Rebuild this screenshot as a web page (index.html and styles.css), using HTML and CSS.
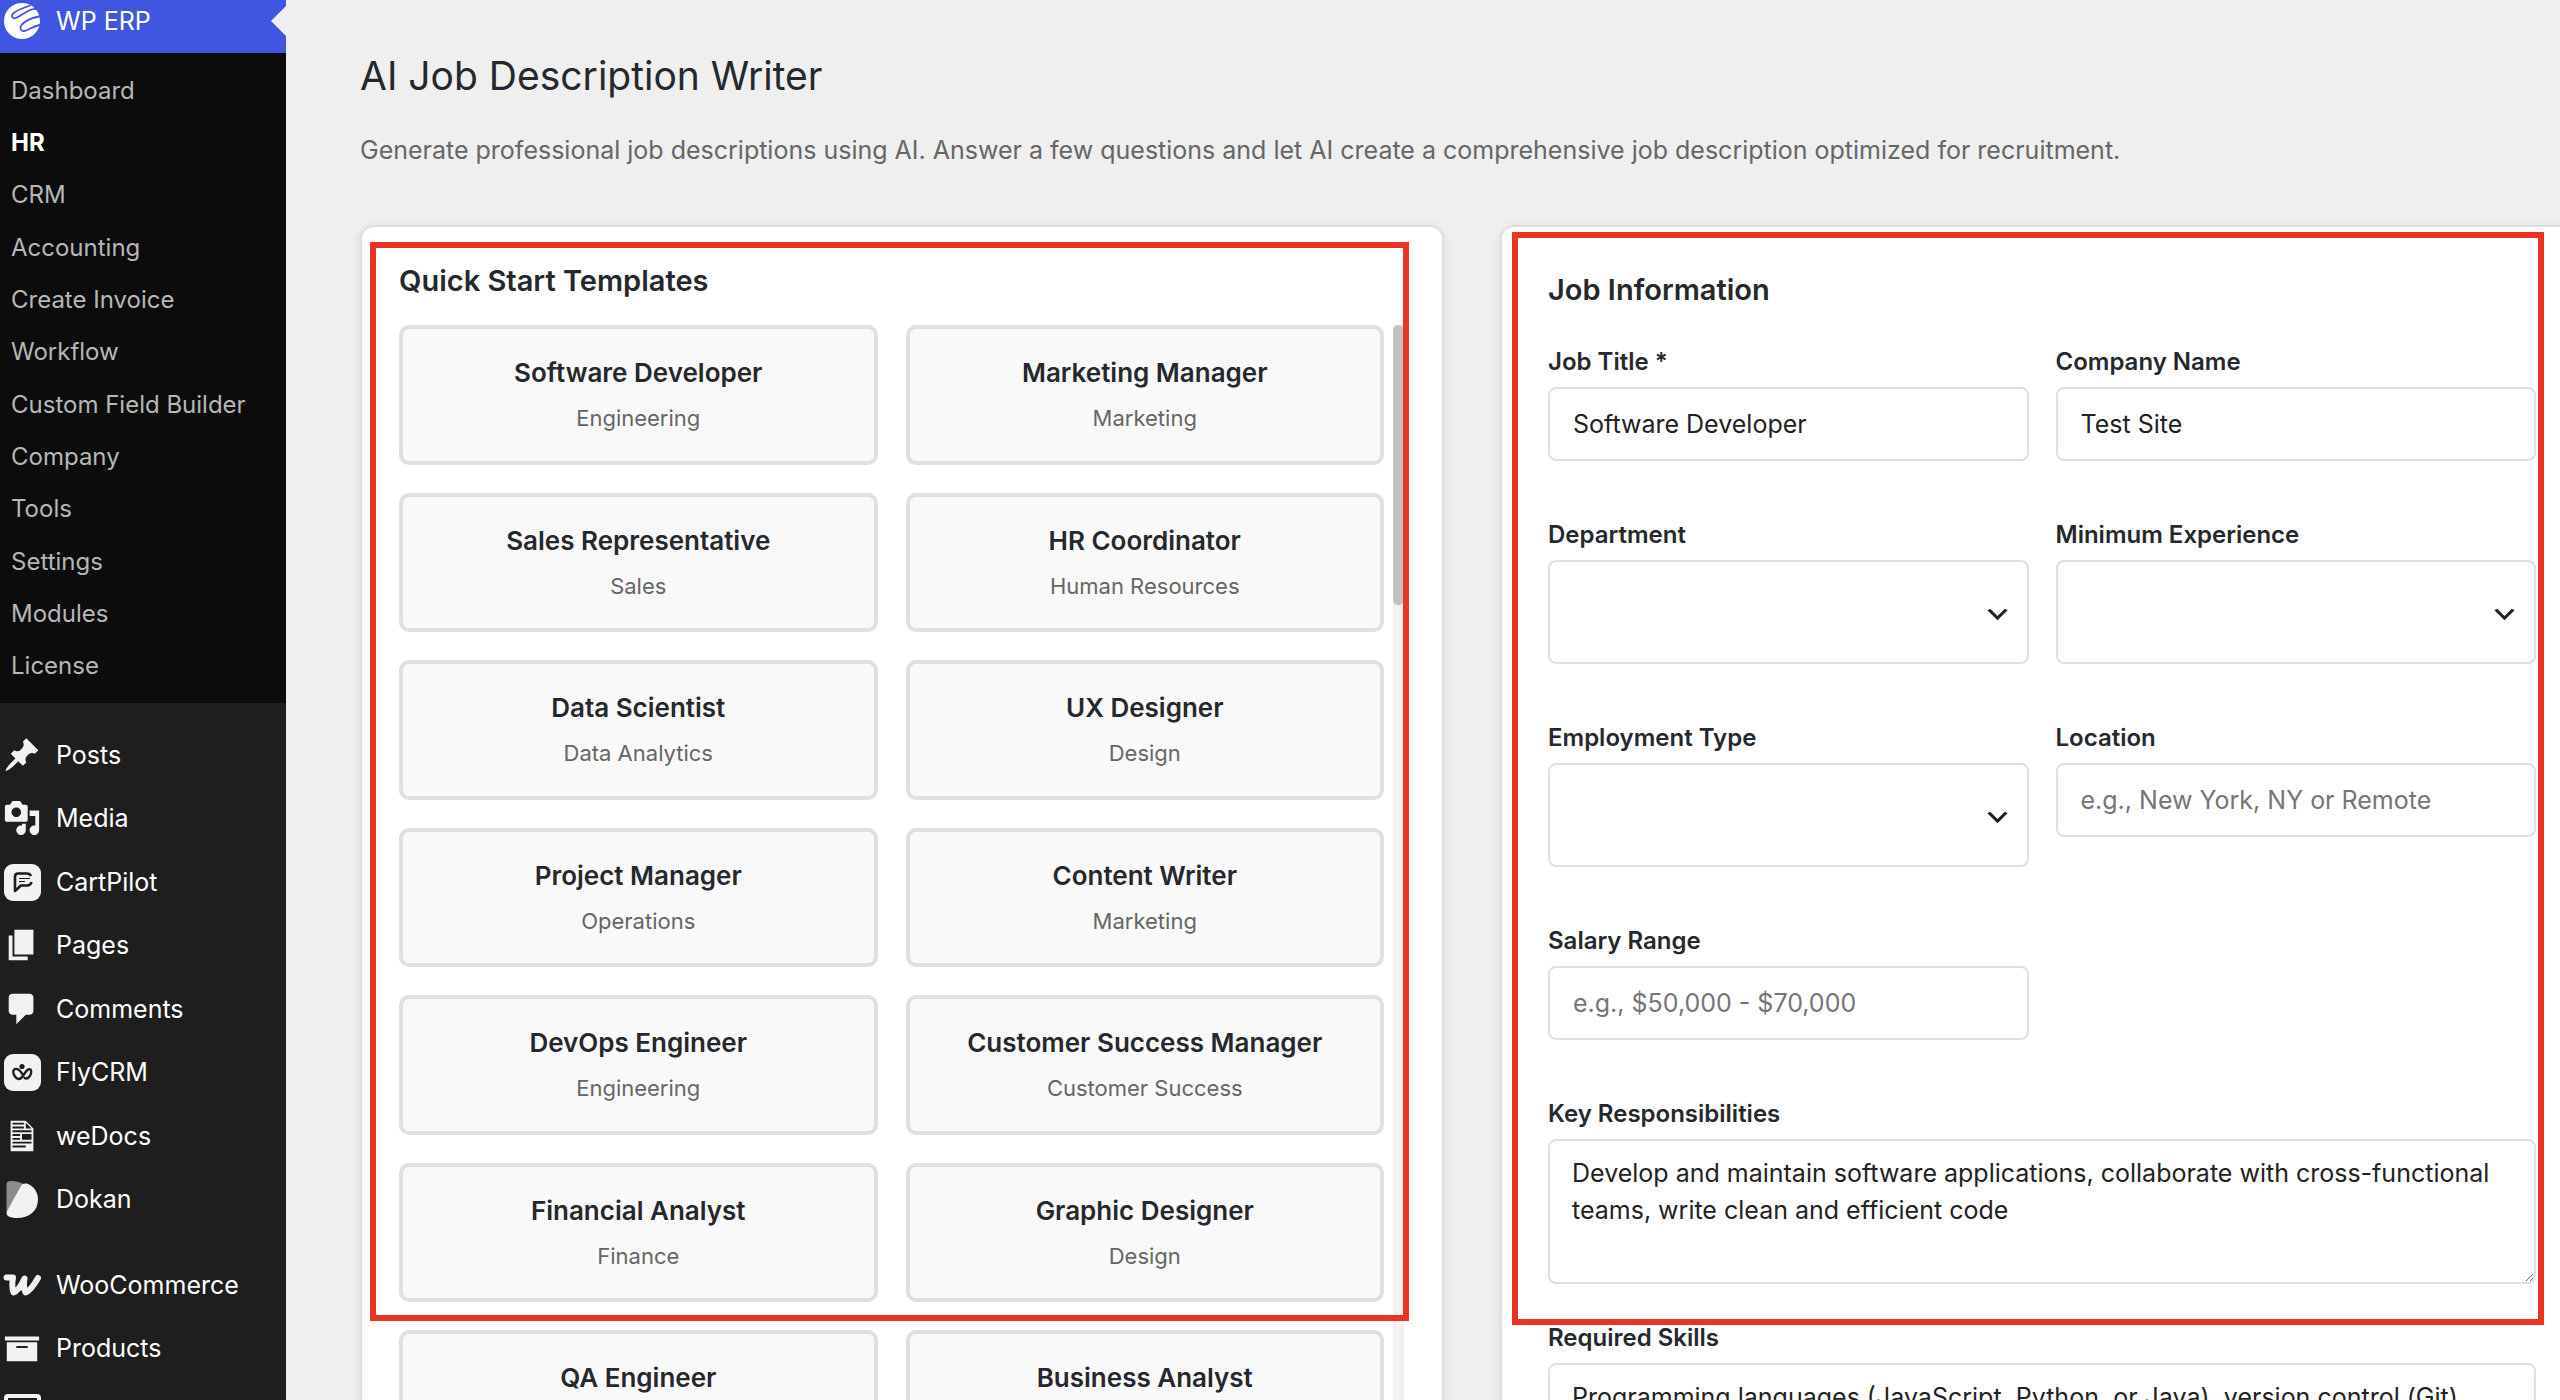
FILE: index.html
```
<!DOCTYPE html>
<html lang="en">
<head>
    <meta charset="UTF-8">
    <meta name="viewport" content="width=device-width, initial-scale=1.0">
    <title>AI Job Description Writer</title>
    <link rel="stylesheet" href="styles.css">
</head>
<body>
    <nav class="sidebar">
        <a class="menu-item current" href="#">
            <svg class="menu-icon" viewBox="0 0 38 38">
                <circle cx="19" cy="19" r="18" fill="#fff"/>
                <g fill="none" stroke="#4056e0" stroke-width="1.8" stroke-linecap="round">
                    <path d="M27 3.500C20 6 13 8.500 10 11.500c-2.500 3 0 5.500 3 4.500 4-1.500 7-4.500 12-7 3-1.500 5-2.500 7.500-2"/>
                    <path d="M36 14.500c-6 1-13 4-17 8-3 3-1.500 7 2 6.500 4-.5 7-4 15.500-6"/>
                </g>
            </svg>
            <span>WP ERP</span>
        </a>
        <ul class="submenu">
            <li><a href="#">Dashboard</a></li>
            <li><a class="active" href="#">HR</a></li>
            <li><a href="#">CRM</a></li>
            <li><a href="#">Accounting</a></li>
            <li><a href="#">Create Invoice</a></li>
            <li><a href="#">Workflow</a></li>
            <li><a href="#">Custom Field Builder</a></li>
            <li><a href="#">Company</a></li>
            <li><a href="#">Tools</a></li>
            <li><a href="#">Settings</a></li>
            <li><a href="#">Modules</a></li>
            <li><a href="#">License</a></li>
        </ul>
        <div class="menu-group">
            <a class="menu-item" href="#">
                <svg class="menu-icon" viewBox="0 0 20 20"><path d="M10.440 3.020l1.820-1.820 6.360 6.350-1.830 1.820c-1.050-.68-2.480-.57-3.410.36l-.75.75c-.92.93-1.040 2.350-.35 3.410l-1.830 1.820-2.410-2.410-2.800 2.790c-.42.42-3.380 2.710-3.800 2.290s1.860-3.390 2.280-3.810l2.790-2.790L4.100 9.360l1.830-1.820c1.050.69 2.480.57 3.400-.36l.75-.75c.93-.92 1.050-2.350.36-3.410z"/></svg>
                <span>Posts</span>
            </a>
            <a class="menu-item" href="#">
                <svg class="menu-icon" viewBox="0 0 20 20"><path d="M13 11V4c0-.55-.45-1-1-1h-1.670L9 1H5L3.670 3H2c-.55 0-1 .45-1 1v7c0 .55.45 1 1 1h10c.55 0 1-.45 1-1zM7 4.500c1.380 0 2.500 1.120 2.500 2.500S8.380 9.500 7 9.500 4.500 8.380 4.500 7 5.620 4.500 7 4.500zM14 6h5v10.500c0 1.380-1.120 2.500-2.500 2.500S14 17.880 14 16.500s1.120-2.500 2.500-2.500c.17 0 .34.02.5.05V9h-3V6zm-4 8.050V13h2v3.500c0 1.380-1.120 2.500-2.500 2.500S7 17.880 7 16.500 8.120 14 9.500 14c.17 0 .34.02.5.05z"/></svg>
                <span>Media</span>
            </a>
            <a class="menu-item" href="#">
                <svg class="menu-icon" viewBox="0 0 38 38">
                    <rect x="1" y="1" width="37" height="37" rx="9"/>
                    <path d="M28 13c-1-2-2-2.500-4-2.500H15c-2 0-3 1-3 3V28l6-5.500h6c2.500 0 4-1.500 4.500-3.500" fill="none" stroke="#1e1e1e" stroke-width="2.600" stroke-linejoin="round"/>
                    <path d="M16 15.500h11M16 18.500h6" stroke="#1e1e1e" stroke-width="1.200"/>
                </svg>
                <span>CartPilot</span>
            </a>
            <a class="menu-item" href="#">
                <svg class="menu-icon" viewBox="0 0 20 20"><path d="M6 15V2h10v13H6zm-1 1h8v2H3V5h2v11z"/></svg>
                <span>Pages</span>
            </a>
            <a class="menu-item" href="#">
                <svg class="menu-icon" viewBox="0 0 20 20"><path d="M5 2h9c1.100 0 2 .9 2 2v7c0 1.100-.9 2-2 2h-2l-5 5v-5H5c-1.100 0-2-.9-2-2V4c0-1.100.9-2 2-2z"/></svg>
                <span>Comments</span>
            </a>
            <a class="menu-item" href="#">
                <svg class="menu-icon" viewBox="0 0 38 38">
                    <rect x="1" y="1" width="37" height="37" rx="9"/>
                    <circle cx="19" cy="13.500" r="2.600" fill="#1e1e1e"/>
                    <path d="M19 20.500c-2-3-5-5-7-4.500-2.500 1-2 5 0 7.500 2 3 5 3.500 7 .5l4-5.500c1.500-2 3.500-3 4.500-2 1.500 2 .5 6-2 8-1.500 1.200-3 1.200-4 .3" fill="none" stroke="#1e1e1e" stroke-width="2.400" stroke-linecap="round"/>
                </svg>
                <span>FlyCRM</span>
            </a>
            <a class="menu-item" href="#">
                <svg class="menu-icon" viewBox="0 0 20 20"><path fill-rule="evenodd" d="M12 2l4 4v12H4V2h8zM5 3v1h6V3H5zm7 3h3l-3-3v3zM5 5v1h6V5H5zm10 3V7H5v1h10zM5 9v1h4V9H5zm10 3V9h-5v3h5zM5 11v1h4v-1H5zm10 3v-1H5v1h10zm-3 2v-1H5v1h7z"/></svg>
                <span>weDocs</span>
            </a>
            <a class="menu-item" href="#">
                <svg class="menu-icon" viewBox="0 0 38 38">
                    <path d="M3.500 32V4c0-2 2-3 5-3 5 0 8 1 12 3z" fill="#8c8b8c"/>
                    <path d="M18 6c1.500-2.500 4-3 7-2 6 2.500 10 8.500 10 15.500C35 31 26 38 14 38c-7 0-12-2-10-7z"/>
                </svg>
                <span>Dokan</span>
            </a>
        </div>
        <div class="menu-group shop-group">
            <a class="menu-item" href="#">
                <svg class="menu-icon" viewBox="0 0 38 38"><path d="M3.500 11.500h6.500c-1 6-1 11 .5 15C15 25 19 18 21.500 12.500c-1 6-1 10 1 14C27 25 31 19 35 12" fill="none" stroke="#f3f1f2" stroke-width="6" stroke-linecap="round" stroke-linejoin="round"/></svg>
                <span>WooCommerce</span>
            </a>
            <a class="menu-item" href="#">
                <svg class="menu-icon" viewBox="0 0 20 20"><path d="M19 4v2H1V4h18zM2 7h16v10H2V7zm11 3V9H7v1h6z"/></svg>
                <span>Products</span>
            </a>
            <a class="menu-item" href="#" aria-label="Payments">
                <svg class="menu-icon" viewBox="0 0 38 38"><rect x="3" y="4" width="33" height="28" rx="2" fill="none" stroke="#f3f1f2" stroke-width="4"/></svg>
            </a>
        </div>
    </nav>

    <main class="content">
        <h1>AI Job Description Writer</h1>
        <p class="intro">Generate professional job descriptions using AI. Answer a few questions and let AI create a comprehensive job description optimized for recruitment.</p>

        <div class="panels">
            <section class="panel templates-panel">
                <h2>Quick Start Templates</h2>
                <div class="templates">
                    <div class="template-grid">
                        <button class="template" type="button"><strong>Software Developer</strong><span>Engineering</span></button>
                        <button class="template" type="button"><strong>Marketing Manager</strong><span>Marketing</span></button>
                        <button class="template" type="button"><strong>Sales Representative</strong><span>Sales</span></button>
                        <button class="template" type="button"><strong>HR Coordinator</strong><span>Human Resources</span></button>
                        <button class="template" type="button"><strong>Data Scientist</strong><span>Data Analytics</span></button>
                        <button class="template" type="button"><strong>UX Designer</strong><span>Design</span></button>
                        <button class="template" type="button"><strong>Project Manager</strong><span>Operations</span></button>
                        <button class="template" type="button"><strong>Content Writer</strong><span>Marketing</span></button>
                        <button class="template" type="button"><strong>DevOps Engineer</strong><span>Engineering</span></button>
                        <button class="template" type="button"><strong>Customer Success Manager</strong><span>Customer Success</span></button>
                        <button class="template" type="button"><strong>Financial Analyst</strong><span>Finance</span></button>
                        <button class="template" type="button"><strong>Graphic Designer</strong><span>Design</span></button>
                        <button class="template" type="button"><strong>QA Engineer</strong></button>
                        <button class="template" type="button"><strong>Business Analyst</strong></button>
                    </div>
                    <div class="scroll-track"><div class="scroll-thumb"></div></div>
                </div>
                <div class="highlight"></div>
            </section>

            <section class="panel form-panel">
                <h2>Job Information</h2>
                <form>
                    <div class="field-grid">
                        <div class="field">
                            <label for="job-title">Job Title *</label>
                            <input type="text" id="job-title" value="Software Developer">
                        </div>
                        <div class="field">
                            <label for="company">Company Name</label>
                            <input type="text" id="company" value="Test Site">
                        </div>
                        <div class="field">
                            <label for="department">Department</label>
                            <select id="department"><option></option></select>
                        </div>
                        <div class="field">
                            <label for="experience">Minimum Experience</label>
                            <select id="experience"><option></option></select>
                        </div>
                        <div class="field">
                            <label for="employment">Employment Type</label>
                            <select id="employment"><option></option></select>
                        </div>
                        <div class="field">
                            <label for="location">Location</label>
                            <input type="text" id="location" placeholder="e.g., New York, NY or Remote">
                        </div>
                        <div class="field">
                            <label for="salary">Salary Range</label>
                            <input type="text" id="salary" placeholder="e.g., $50,000 - $70,000">
                        </div>
                    </div>
                    <div class="field field-wide">
                        <label for="responsibilities">Key Responsibilities</label>
                        <textarea id="responsibilities">Develop and maintain software applications, collaborate with cross-functional teams, write clean and efficient code</textarea>
                    </div>
                    <div class="field field-wide">
                        <label for="skills">Required Skills</label>
                        <textarea id="skills">Programming languages (JavaScript, Python, or Java), version control (Git)</textarea>
                    </div>
                </form>
                <div class="highlight"></div>
            </section>
        </div>
    </main>
</body>
</html>
```
FILE: styles.css
```
* {
    box-sizing: border-box;
}
body {
    margin: 0;
    display: flex;
    height: 100vh;
    overflow: hidden;
    background: #efefef;
    color: #25282d;
    font-family: Inter, "Liberation Sans", sans-serif;
    font-size: 25px;
}
a {
    color: inherit;
    text-decoration: none;
}

/* Sidebar */
.sidebar {
    flex: 0 0 286px;
    background: #1e1e1e;
    color: #fff;
}
.menu-item {
    display: flex;
    align-items: center;
    gap: 15px;
    padding-left: 3px;
}
.menu-icon {
    width: 38px;
    height: 38px;
    fill: #f3f1f2;
}
.current {
    position: relative;
    height: 53px;
    padding-bottom: 12px;
    background: #4056e0;
}
/* Arrow that points at the open page */
.current::after {
    content: "";
    position: absolute;
    right: 0;
    top: 6px;
    border: 15px solid transparent;
    border-left-width: 0;
    border-right-color: #efefef;
}
.submenu {
    display: grid;
    align-items: center;
    height: 650px;
    margin: 0 0 20px;
    padding: 11px;
    list-style: none;
    background: #0c0c0c;
    color: #b7b7b7;
    font-size: 24px;
}
.submenu .active {
    color: #fff;
    font-weight: 700;
}
.menu-group {
    display: grid;
    height: 508px;
}
.shop-group {
    height: 190px;
    margin-top: 22px;
}

/* Page */
.content {
    flex: 1;
    min-width: 0;
    padding: 50px 0 0 74px;
}
h1 {
    margin: 0 0 28px;
    font-size: 39px;
    font-weight: 400;
    line-height: 52px;
}
.intro {
    margin: 0 0 55px;
    color: #666;
    line-height: 40px;
}
.panels {
    display: grid;
    grid-template-columns: 1fr 1fr;
    gap: 56px;
    margin-right: -24px;
}
.panel {
    position: relative;
    border: 2px solid #dfdfdf;
    border-radius: 14px;
    background: #fff;
    box-shadow: 0 2px 8px rgba(0, 0, 0, 0.1);
}
.panel h2 {
    margin: 0;
    font-size: 29px;
    font-weight: 600;
    line-height: 40px;
}
.highlight {
    position: absolute;
    border: 6px solid #ea3323;
    pointer-events: none;
}

/* Templates */
.templates-panel {
    padding: 34px 38px 0 37px;
}
.templates-panel h2 {
    margin-bottom: 24px;
}
.templates-panel .highlight {
    top: 15px;
    left: 8px;
    right: 33px;
    height: 1079px;
}
.templates {
    display: flex;
    gap: 9px;
}
.template-grid {
    flex: 1;
    display: grid;
    grid-template-columns: 1fr 1fr;
    grid-auto-rows: 1fr;
    gap: 28px;
    height: 1145px;
}
.template {
    display: flex;
    flex-direction: column;
    align-items: center;
    gap: 11px;
    padding: 26px 16px 0;
    border: 4px solid #e0e0e0;
    border-radius: 10px;
    background: #f9f9f9;
    color: #25282d;
    font-family: inherit;
}
.template strong {
    font-size: 26px;
    font-weight: 600;
    line-height: 36px;
}
.template span {
    color: #666;
    font-size: 22px;
    line-height: 32px;
}
.scroll-track {
    width: 11px;
    background: #f1f1f1;
}
.scroll-thumb {
    height: 280px;
    border-radius: 6px;
    background: #c1c1c1;
}

/* Form */
.form-panel {
    padding: 43px 46px 0;
}
.form-panel h2 {
    margin-bottom: 35px;
}
.form-panel .highlight {
    top: 5px;
    left: 10px;
    right: 38px;
    height: 1093px;
}
.field-grid {
    display: grid;
    grid-template-columns: 1fr 1fr;
    gap: 57px 27px;
    align-items: start;
    margin-bottom: 57px;
}
.field {
    display: flex;
    flex-direction: column;
    gap: 8px;
}
.field-wide {
    margin-bottom: 37px;
}
label {
    font-size: 24px;
    font-weight: 600;
    line-height: 34px;
}
input, select, textarea {
    width: 100%;
    margin: 0;
    border: 2px solid #dfdfdf;
    border-radius: 8px;
    background-color: #fff;
    color: #222;
    font-family: inherit;
    font-size: 25px;
    outline: none;
}
input {
    height: 74px;
    padding: 0 23px;
}
input::placeholder {
    color: #757575;
    opacity: 1;
}
select {
    height: 104px;
    appearance: none;
    background-image: url("data:image/svg+xml,%3Csvg xmlns='http://www.w3.org/2000/svg' viewBox='0 0 20 20'%3E%3Cpath d='M5 6l5 5 5-5 2 1-7 7-7-7 2-1z' fill='%23222'/%3E%3C/svg%3E");
    background-repeat: no-repeat;
    background-position: right 15px top 38px;
    background-size: 29px;
}
textarea {
    height: 145px;
    padding: 14px 22px;
    line-height: 37px;
    resize: vertical;
}
```
